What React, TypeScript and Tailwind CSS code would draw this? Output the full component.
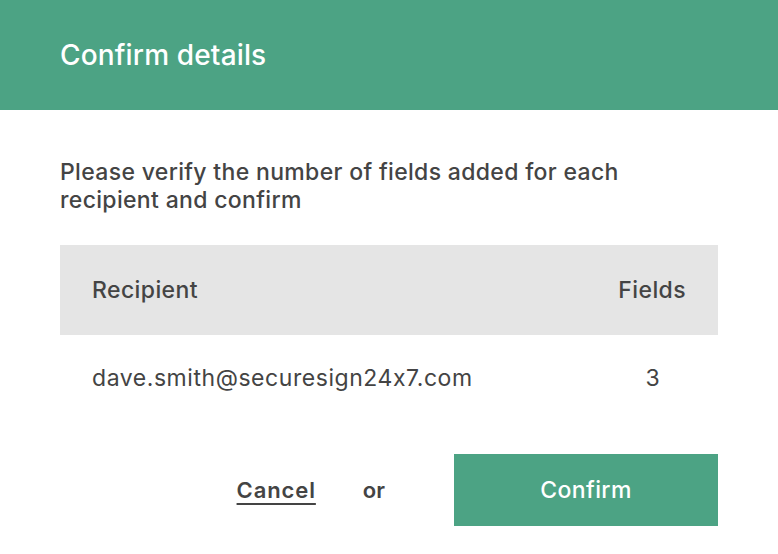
import React from "react";

export default function App() {
  return (
    <div className="w-[778px] h-[554px] bg-white overflow-hidden [font-feature-settings:'calt'_0]" style={{ fontFamily: "Inter, 'Noto Sans', sans-serif" }}>
      <div className="h-[110px] bg-[#4ca384] px-[60px] flex items-center">
        <h1 className="text-white text-[28px] font-medium leading-none tracking-[0.15px]">Confirm details</h1>
      </div>
      <div className="px-[60px] pt-[48px]">
        <p className="text-[#444444] text-[23px] font-medium leading-[28px] w-[600px] tracking-[0.33px]">
          Please verify the number of fields added for each recipient and confirm
        </p>
        <div className="mt-[31px] text-[#444444] text-[23px]">
          <div className="h-[90px] bg-[#e5e5e5] px-[32px] flex items-center justify-between font-medium tracking-[0.4px]">
            <span>Recipient</span>
            <span>Fields</span>
          </div>
          <div className="h-[86px] px-[32px] flex items-center justify-between tracking-[0.55px]">
            <span>dave.smith@securesign24x7.com</span>
            <span className="w-[66px] text-center">3</span>
          </div>
        </div>
        <div className="mt-[33px] flex items-center justify-end">
          <button className="text-[#444444] text-[22px] font-semibold tracking-[0.9px] underline underline-offset-[5px] decoration-2">Cancel</button>
          <span className="ml-[47px] mr-[69px] text-[#444444] text-[22px] font-semibold">or</span>
          <button className="w-[264px] h-[72px] bg-[#4ca384] text-white text-[23px] font-medium tracking-[0.4px]">Confirm</button>
        </div>
      </div>
    </div>
  );
}
